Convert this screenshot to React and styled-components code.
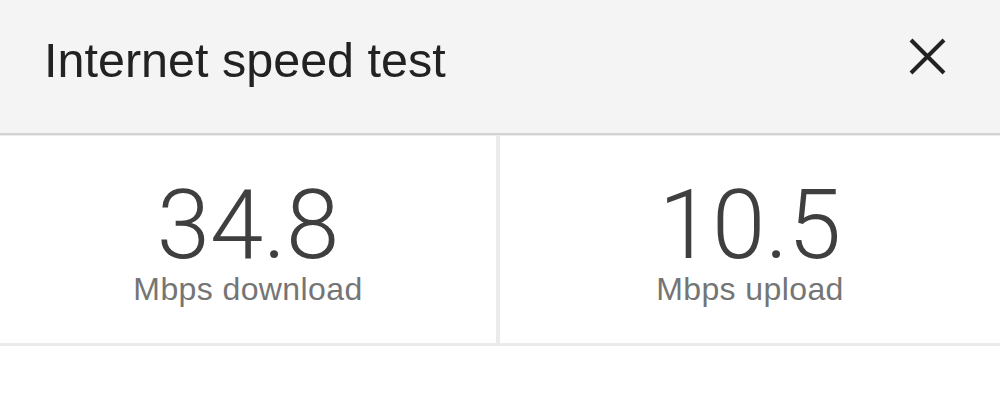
import styled, { createGlobalStyle } from "styled-components";

const GlobalStyle = createGlobalStyle`
  html, body {
    margin: 0;
    padding: 0;
    background: #fff;
  }
  body {
    font-family: "Liberation Sans", Arial, sans-serif;
  }
`;

const Page = styled.div`
  width: 1000px;
  height: 403px;
  background: #fff;
  overflow: hidden;
`;

const Header = styled.header`
  height: 135px;
  display: flex;
  align-items: center;
  justify-content: space-between;
  box-sizing: border-box;
  padding: 0 54px 12px 44px;
  background: #f4f4f4;
  border-bottom: 2px solid #d3d3d3;
  box-shadow: 0 1px 0 #ececec;
  position: relative;
`;

const Title = styled.h1`
  margin: 0;
  font-family: "Liberation Sans", Arial, sans-serif;
  font-weight: 400;
  font-size: 48.5px;
  line-height: 1;
  color: #222;
`;

const CloseButton = styled.button`
  border: 0;
  padding: 0;
  background: none;
  width: 37px;
  height: 37px;
  margin-bottom: 9px;
  cursor: pointer;
  svg {
    display: block;
  }
`;

const Stats = styled.section`
  display: grid;
  grid-template-columns: 1fr 1fr;
  border-bottom: 3px solid #ebebeb;
`;

const Stat = styled.div`
  display: flex;
  flex-direction: column;
  align-items: center;
  padding: 42px 0 38px;
  border-right: ${(p) => (p.$divider ? "4px solid #ebebeb" : "0")};
`;

const Value = styled.div`
  font-family: Roboto, "Liberation Sans", sans-serif;
  font-weight: 300;
  font-size: 96px;
  line-height: 1;
  color: #3f3f3f;
`;

const Label = styled.div`
  font-family: "Liberation Sans", Arial, sans-serif;
  font-size: 32px;
  line-height: 1;
  letter-spacing: 0.4px;
  color: #757575;
`;

function CloseIcon() {
  return (
    <svg width="37" height="37" viewBox="0 0 37 37">
      <path d="M2 2 L35 35 M35 2 L2 35" stroke="#222" strokeWidth="4" fill="none" />
    </svg>
  );
}

const stats = [
  { value: "34.8", label: "Mbps download" },
  { value: "10.5", label: "Mbps upload" },
];

export default function App() {
  return (
    <Page>
      <GlobalStyle />
      <Header>
        <Title>Internet speed test</Title>
        <CloseButton aria-label="Close">
          <CloseIcon />
        </CloseButton>
      </Header>
      <Stats>
        {stats.map((s, i) => (
          <Stat key={s.label} $divider={i === 0}>
            <Value>{s.value}</Value>
            <Label>{s.label}</Label>
          </Stat>
        ))}
      </Stats>
    </Page>
  );
}
